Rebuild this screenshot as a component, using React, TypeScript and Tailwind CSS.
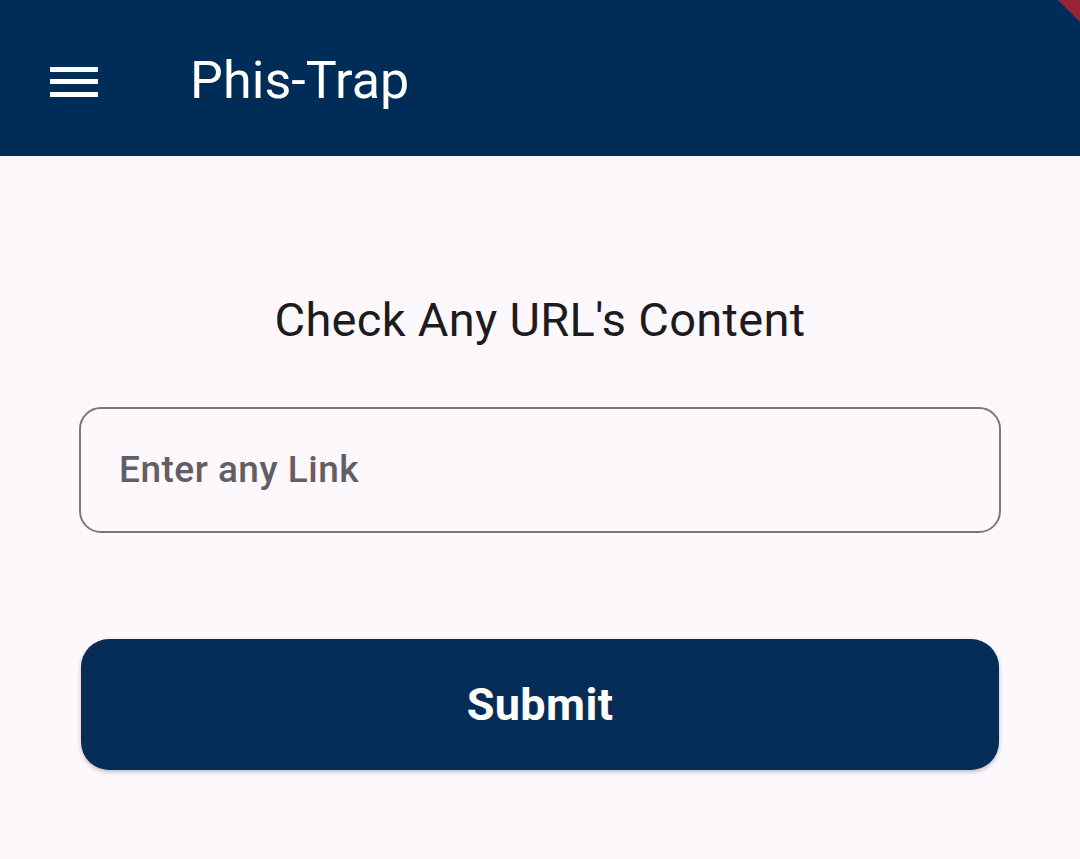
import React from "react";

function MenuIcon() {
    return (
        <svg width="48" height="30" viewBox="0 0 48 30" className="block">
            <rect x="0" y="0" width="48" height="5" fill="#ffffff" />
            <rect x="0" y="12" width="48" height="5" fill="#ffffff" />
            <rect x="0" y="25" width="48" height="5" fill="#ffffff" />
        </svg>
    );
}

export default function App() {
    return (
        <div className="relative w-[1080px] h-[859px] overflow-hidden bg-[#fdf8fc] font-['Roboto',sans-serif]">
            {/* App bar */}
            <header className="h-[156px] bg-[#002d57] flex items-center">
                <button className="ml-[50px] w-[48px] flex items-center mt-[8px]">
                    <MenuIcon />
                </button>
                <h1 className="ml-[92px] text-white text-[52px] leading-none tracking-[0.1px] mt-[6px]">
                    Phis-Trap
                </h1>
            </header>

            {/* corner banner */}
            <div className="absolute top-0 right-0 w-0 h-0 border-t-[22px] border-t-[#9b2335] border-l-[22px] border-l-transparent" />

            {/* Body */}
            <main className="flex flex-col items-center px-[79px]">
                <h2 className="mt-[140px] text-[47px] leading-none text-[#1c1b1f] tracking-[0.3px]">
                    Check Any URL's Content
                </h2>

                <div className="mt-[64px] w-full h-[126px] rounded-[22px] border-2 border-[#7b777f] flex items-center px-[38px]">
                    <span className="text-[37px] font-medium text-[#625e66] tracking-[0.5px]">Enter any Link</span>
                </div>

                <button className="mt-[106px] w-[918px] h-[131px] rounded-[28px] bg-[#062d57] shadow-[0_2px_4px_rgba(0,0,0,0.25)] flex items-center justify-center">
                    <span className="text-white text-[45px] font-bold tracking-[0.4px]">Submit</span>
                </button>
            </main>
        </div>
    );
}
